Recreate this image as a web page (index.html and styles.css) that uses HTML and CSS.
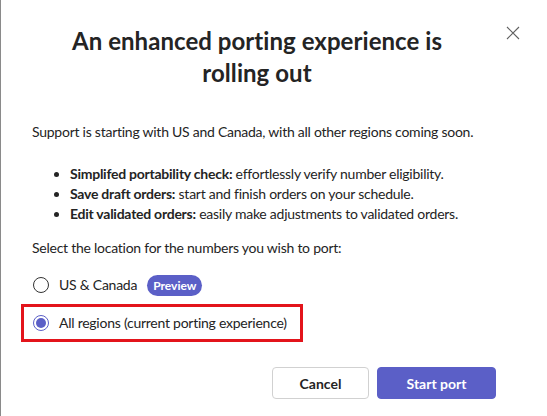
FILE: index.html
```html
<!DOCTYPE html>
<html lang="en">
<head>
<meta charset="utf-8">
<title>Porting</title>
<link rel="stylesheet" href="styles.css">
</head>
<body>
<div class="dialog">
  <div class="header">
    <h1 class="title">An enhanced porting experience is rolling out</h1>
    <button class="close" aria-label="Close">
      <svg width="14" height="14" viewBox="0 0 14 14"><path d="M1 1L13 13M13 1L1 13" stroke="#616161" stroke-width="1.1" fill="none"/></svg>
    </button>
  </div>
  <p class="intro">Support is starting with US and Canada, with all other regions coming soon.</p>
  <ul class="features">
    <li><b>Simplifed portability check:</b> effortlessly verify number eligibility.</li>
    <li><b>Save draft orders:</b> start and finish orders on your schedule.</li>
    <li><b>Edit validated orders:</b> easily make adjustments to validated orders.</li>
  </ul>
  <p class="prompt">Select the location for the numbers you wish to port:</p>
  <div class="options">
    <label class="option">
      <span class="radio"></span>
      <span class="label">US &amp; Canada</span>
      <span class="badge">Preview</span>
    </label>
    <div class="highlight">
      <label class="option">
        <span class="radio checked"></span>
        <span class="label">All regions (current porting experience)</span>
      </label>
    </div>
  </div>
  <div class="actions">
    <button class="btn secondary">Cancel</button>
    <button class="btn primary">Start port</button>
  </div>
</div>
</body>
</html>
```
FILE: styles.css
```css
* { box-sizing: border-box; }
html, body { margin: 0; padding: 0; background: #ffffff; }
body {
  font-family: "Lato", "Open Sans", sans-serif;
  color: #242424;
  font-size: 14px;
  line-height: 20px;
  letter-spacing: -0.25px;
}
.dialog {
  width: 547px;
  height: 416px;
  border-left: 1px solid #8a8a8a;
  padding: 25px 0 0 31px;
  display: flex;
  flex-direction: column;
}
.header {
  display: flex;
  align-items: flex-start;
}
.title {
  flex: 0 0 450px;
  margin: 0;
  padding: 0 30px;
  font-size: 24px;
  line-height: 32px;
  font-weight: 700;
  text-align: center;
  letter-spacing: 0.05px;
}
.close {
  margin: 1px 0 0 24px;
  padding: 0;
  border: 0;
  background: none;
  width: 14px;
  height: 14px;
  display: flex;
}
.intro {
  margin: 33px 0 0;
}
.features {
  margin: 22px 0 0;
  padding-left: 38px;
}
.features b { font-weight: 700; }
.prompt {
  margin: 14px 0 0;
}
.options {
  margin-top: 13px;
  display: flex;
  flex-direction: column;
  gap: 5px;
}
.option {
  display: flex;
  align-items: center;
  height: 28px;
  padding-left: 1px;
  white-space: nowrap;
}
.radio {
  width: 16px;
  height: 16px;
  border-radius: 50%;
  border: 1px solid #333333;
  margin-right: 10px;
  display: flex;
  align-items: center;
  justify-content: center;
  flex: none;
}
.radio.checked { border-color: #5b5fc7; }
.radio.checked::after {
  content: "";
  width: 10px;
  height: 10px;
  border-radius: 50%;
  background: #5b5fc7;
}
.badge {
  margin-left: 10px;
  height: 21px;
  padding: 0 6px;
  border-radius: 11px;
  background: #5b5fc7;
  color: #ffffff;
  font-size: 12px;
  font-weight: 700;
  line-height: 21px;
  letter-spacing: 0;
}
.highlight {
  align-self: flex-start;
  width: 282px;
  height: 38px;
  margin-left: -11px;
  border: 3px solid #e3141b;
  padding: 2px 0 0 8px;
}
.actions {
  margin-top: 25px;
  padding-right: 51px;
  display: flex;
  justify-content: flex-end;
  gap: 8px;
}
.btn {
  height: 32px;
  border-radius: 4px;
  font-family: "Lato", "Open Sans", sans-serif;
  font-size: 14px;
  font-weight: 700;
  letter-spacing: 0;
  cursor: pointer;
}
.secondary {
  width: 97px;
  background: #ffffff;
  border: 1px solid #d1d1d1;
  color: #242424;
}
.primary {
  width: 119px;
  background: #5b5fc7;
  border: 1px solid #5b5fc7;
  color: #ffffff;
}
```
